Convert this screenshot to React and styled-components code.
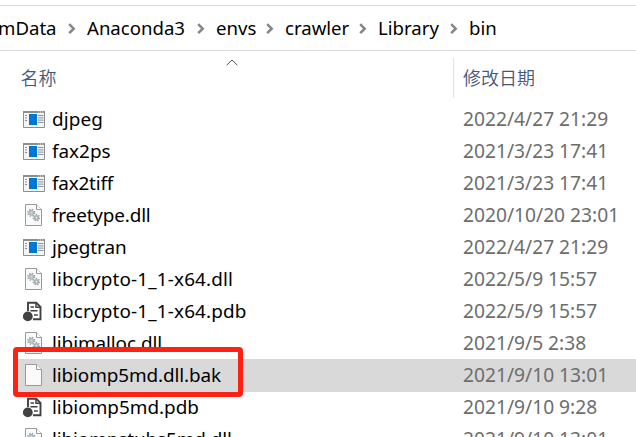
import React from "react";
import styled, { createGlobalStyle } from "styled-components";

const Global = createGlobalStyle`
  * { box-sizing: border-box; }
  body { margin: 0; background: #fff; overflow: hidden; }
`;
const Window = styled.main`
  position: relative;
  width: 636px;
  height: 437px;
  overflow: hidden;
  background: #fff;
  color: #000;
  font-family: "Noto Sans", "Noto Sans CJK SC", sans-serif;
  font-size: 18.9px;
  white-space: nowrap;
`;
const AddressBar = styled.nav`
  display: flex;
  align-items: center;
  height: 46px;
  margin-top: 5px;
  border-top: 1px solid #d9d9d9;
  border-bottom: 1px solid #d9d9d9;
  padding-bottom: 2px;
  font-size: 18.6px;
`;
const Crumb = styled.span`
  flex: none;
  width: ${(p) => p.$width}px;
  margin-left: ${(p) => p.$offset || 0}px;
`;
const CrumbArrow = styled.svg`
  flex: none;
  width: 8px;
  height: 12px;
  margin: 3px 11px 0 12px;
`;
const Header = styled.header`
  position: relative;
  display: grid;
  grid-template-columns: 454px 1fr;
  height: 52px;
  color: #44587a;
  font-family: "Noto Sans CJK SC", sans-serif;
  font-size: 18px;
  font-weight: 350;
  line-height: 38px;
`;
const HeaderCell = styled.div`
  margin-top: 7px;
  height: 40px;
  padding-left: ${(p) => p.$pad}px;
  border-right: ${(p) => (p.$divided ? "1px solid #e2e2e2" : "0")};
`;
const SortArrow = styled.svg`
  position: absolute;
  left: 226px;
  top: 8px;
  width: 12px;
  height: 7px;
`;
const FileList = styled.section`
  display: flex;
  flex-direction: column;
`;
const FileRow = styled.div`
  display: grid;
  grid-template-columns: 34px 411px 1fr;
  align-items: center;
  flex: none;
  height: 32px;
  margin-left: 18px;
  background: ${(p) => (p.$selected ? "#d9d9d9" : "transparent")};
  box-shadow: ${(p) => (p.$selected ? "0 1px #d9d9d9" : "none")};
`;
const FileName = styled.span`
  line-height: 32px;
  letter-spacing: ${(p) => p.$spacing || 0}px;
`;
const Modified = styled.time`
  color: #6d6d6d;
  font-size: 19.2px;
  line-height: 32px;
`;
const Icon = styled.svg`
  display: block;
  width: 24px;
  height: 24px;
  margin-left: 4px;
`;
const Highlight = styled.div`
  position: absolute;
  left: 13px;
  top: 347px;
  width: 230px;
  height: 50px;
  border: 5px solid #ff2114;
  border-radius: 4px;
`;

function Page() {
  return (
    <>
      <path d="M3.5 1.5h11l5 5v16h-16z" fill="#fafafa" stroke="#999" />
      <path d="M14.5 1.5v5h5" fill="#fff" stroke="#999" />
    </>
  );
}
function Gear({ x, y, r }) {
  return (
    <g transform={`translate(${x} ${y})`} fill="none" stroke="#94a2aa">
      <circle r={r} strokeWidth="1" fill="#dfe5e8" />
      <circle r={r + 1} strokeWidth="1.2" strokeDasharray="1.3 1.5" />
      <circle r="1.1" fill="#fff" strokeWidth=".8" />
    </g>
  );
}
function FileIcon({ type }) {
  if (type === "app")
    return (
      <Icon viewBox="0 0 24 24">
        <path d="M1.5 4.5h21v16h-21z" fill="#f5f5f5" stroke="#8b9092" />
        <path d="M1 4h22v2H1z" fill="#8b9092" />
        <path d="M16 5h1m1 0h1m1 0h1" stroke="#e6e6e6" />
        <path d="M7 7h8v11H7z" fill="#0078d7" />
        <path d="M3 8.5h2m-2 2.5h2m-2 2.5h2m11-5h5.5m-5.5 2.3h5.5m-5.5 2.3h5.5m-5.5 2.3h5.5" stroke="#8b9092" />
      </Icon>
    );
  if (type === "pdb")
    return (
      <Icon viewBox="0 0 24 24">
        <path d="M6 12V3.8h8.2L18.5 8v12.3H11" fill="#fff" stroke="#414141" strokeWidth="1.9" />
        <path d="M14 4v4.3h4.5M8.5 8h3.5M8.5 11.7h7M12 16h3.8" fill="none" stroke="#414141" strokeWidth="1.5" />
        <circle cx="5.8" cy="17.4" r="4.9" fill="#414141" />
      </Icon>
    );
  return (
    <Icon viewBox="0 0 24 24">
      <Page />
      {type === "dll" && (
        <>
          <Gear x={9.2} y={9.8} r={2.5} />
          <Gear x={14.4} y={14.8} r={2.2} />
        </>
      )}
    </Icon>
  );
}

const crumbs = [
  { text: "mData", width: 58, offset: -2 },
  { text: "Anaconda3", width: 98 },
  { text: "envs", width: 38 },
  { text: "crawler", width: 62 },
  { text: "Library", width: 60 },
  { text: "bin", width: 30 },
];
const files = [
  ["djpeg", "app", "2022/4/27 21:29", 0.15],
  ["fax2ps", "app", "2021/3/23 17:41"],
  ["fax2tiff", "app", "2021/3/23 17:41", -0.2],
  ["freetype.dll", "dll", "2020/10/20 23:01", -0.15],
  ["jpegtran", "app", "2022/4/27 21:29", -0.1],
  ["libcrypto-1_1-x64.dll", "dll", "2022/5/9 15:57", 0.15],
  ["libcrypto-1_1-x64.pdb", "pdb", "2022/5/9 15:57", 0.15],
  ["libimalloc.dll", "dll", "2021/9/5 2:38", -0.08],
  ["libiomp5md.dll.bak", "blank", "2021/9/10 13:01", -0.1],
  ["libiomp5md.pdb", "pdb", "2021/9/10 9:28"],
  ["libiompstubs5md.dll", "dll", "2021/9/10 13:01", -0.1],
];

export default function App() {
  return (
    <>
      <Global />
      <Window>
        <AddressBar>
          {crumbs.map((c, i) => (
            <React.Fragment key={c.text}>
              {i > 0 && (
                <CrumbArrow viewBox="0 0 8 12">
                  <path d="M1.2 1.2l4.5 4.5-4.5 4.5" fill="none" stroke="#858585" strokeWidth="2.5" />
                </CrumbArrow>
              )}
              <Crumb $width={c.width} $offset={c.offset}>{c.text}</Crumb>
            </React.Fragment>
          ))}
        </AddressBar>
        <Header>
          <HeaderCell $pad={20.5} $divided>名称</HeaderCell>
          <HeaderCell $pad={9}>修改日期</HeaderCell>
          <SortArrow viewBox="0 0 12 7">
            <path d="M.7 6.2L6 1l5.3 5.2" fill="none" stroke="#555" />
          </SortArrow>
        </Header>
        <FileList>
          {files.map(([name, type, date, spacing]) => (
            <FileRow key={name} $selected={type === "blank"}>
              <FileIcon type={type} />
              <FileName $spacing={spacing}>{name}</FileName>
              <Modified>{date}</Modified>
            </FileRow>
          ))}
        </FileList>
        <Highlight />
      </Window>
    </>
  );
}
